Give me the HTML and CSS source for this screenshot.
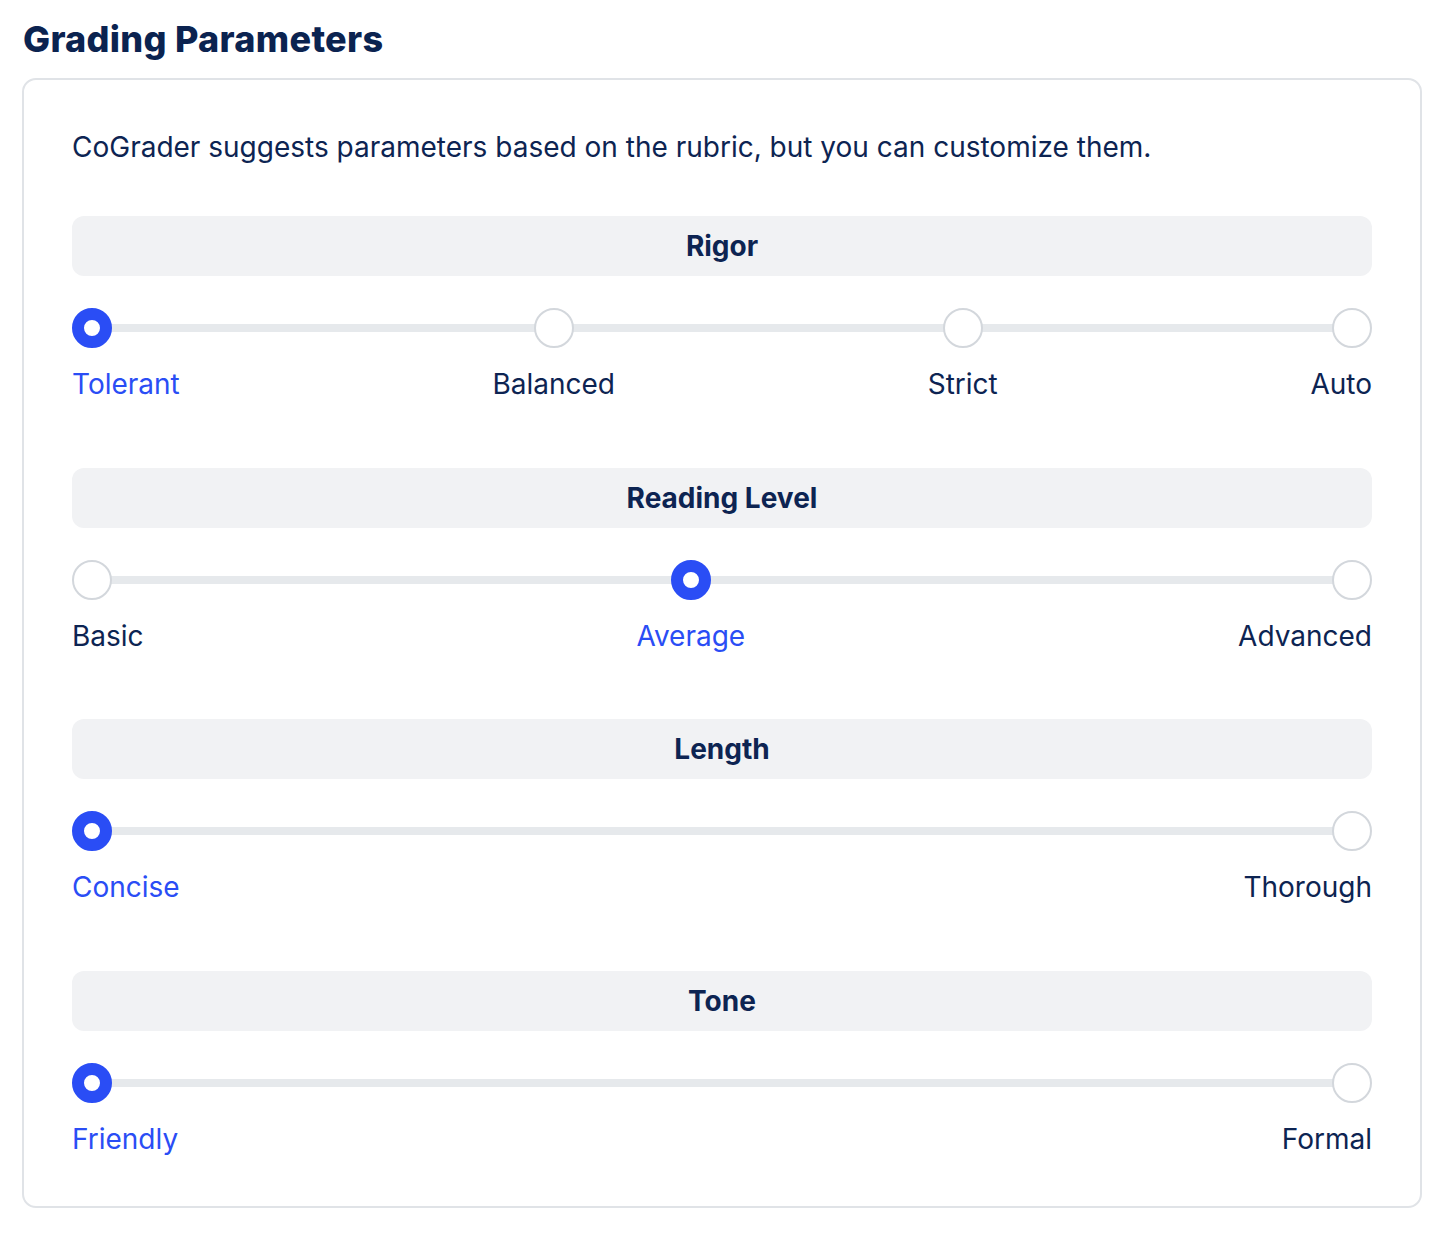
FILE: index.html
```html
<!DOCTYPE html>
<html lang="en">
<head>
<meta charset="utf-8">
<title>Grading Parameters</title>
<link rel="stylesheet" href="styles.css">
</head>
<body>
<main class="page">
  <h1 class="title">Grading Parameters</h1>
  <section class="card">
    <p class="intro">CoGrader suggests parameters based on the rubric, but you can customize them.</p>

    <div class="param">
      <div class="param-head">Rigor</div>
      <div class="scale">
        <div class="opt first active"><span class="dot"></span><span class="label">Tolerant</span></div>
        <div class="opt"><span class="dot"></span><span class="label">Balanced</span></div>
        <div class="opt"><span class="dot"></span><span class="label">Strict</span></div>
        <div class="opt last"><span class="dot"></span><span class="label">Auto</span></div>
      </div>
    </div>

    <div class="param">
      <div class="param-head">Reading Level</div>
      <div class="scale">
        <div class="opt first"><span class="dot"></span><span class="label">Basic</span></div>
        <div class="opt active"><span class="dot"></span><span class="label">Average</span></div>
        <div class="opt last"><span class="dot"></span><span class="label">Advanced</span></div>
      </div>
    </div>

    <div class="param">
      <div class="param-head">Length</div>
      <div class="scale">
        <div class="opt first active"><span class="dot"></span><span class="label">Concise</span></div>
        <div class="opt last"><span class="dot"></span><span class="label">Thorough</span></div>
      </div>
    </div>

    <div class="param">
      <div class="param-head">Tone</div>
      <div class="scale">
        <div class="opt first active"><span class="dot"></span><span class="label">Friendly</span></div>
        <div class="opt last"><span class="dot"></span><span class="label">Formal</span></div>
      </div>
    </div>
  </section>
</main>
</body>
</html>
```
FILE: styles.css
```css
* { box-sizing: border-box; }

body {
  margin: 0;
  background: #ffffff;
  font-family: Inter, "Noto Sans", "Liberation Sans", sans-serif;
  color: #0d2452;
}

.page {
  padding: 17px 28px 0 22px;
  width: 1450px;
}

.title {
  margin: 0 0 17px 1px;
  font-size: 36px;
  font-weight: 800;
  line-height: 44px;
  letter-spacing: 0.3px;
  color: #0b2350;
}

.card {
  border: 2px solid #e0e3e7;
  border-radius: 14px;
  padding: 47px 48px 47px 48px;
  width: 1400px;
}

.intro {
  margin: 0 0 49px 0;
  font-size: 28px;
  line-height: 40px;
}

.param + .param {
  margin-top: 63.5px;
}

.param-head {
  height: 60px;
  border-radius: 12px;
  background: #f1f2f4;
  display: flex;
  align-items: center;
  justify-content: center;
  font-size: 28px;
  font-weight: 700;
  color: #0d2452;
}

.scale {
  position: relative;
  display: flex;
  justify-content: space-between;
  margin-top: 32px;
}

.scale::before {
  content: "";
  position: absolute;
  left: 20px;
  right: 20px;
  top: 16px;
  height: 8px;
  background: #e6e9ec;
}

.opt {
  position: relative;
  display: flex;
  flex-direction: column;
  align-items: center;
}

.opt.first { align-items: flex-start; }
.opt.last { align-items: flex-end; }

.dot {
  width: 40px;
  height: 40px;
  border-radius: 50%;
  background: #ffffff;
  border: 2px solid #d3d7dc;
}

.opt.active .dot {
  border: 12px solid #2a4df5;
}

.label {
  margin-top: 16px;
  font-size: 28px;
  line-height: 40px;
  white-space: nowrap;
}

.opt.active .label {
  color: #2a4df5;
}
```
